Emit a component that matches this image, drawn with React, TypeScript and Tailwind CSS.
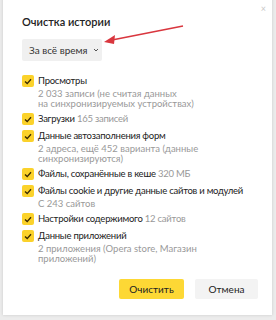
const items = [
  { title: 'Просмотры', sub: ['2 033 записи (не считая данных', 'на синхронизируемых устройствах)'] },
  { title: 'Загрузки', extra: '165 записей' },
  { title: 'Данные автозаполнения форм', sub: ['2 адреса, ещё 452 варианта (данные', 'синхронизируются)'] },
  { title: 'Файлы, сохранённые в кеше', extra: '320 МБ' },
  { title: 'Файлы cookie и другие данные сайтов и модулей', sub: ['С 243 сайтов'] },
  { title: 'Настройки содержимого', extra: '12 сайтов' },
  { title: 'Данные приложений', sub: ['2 приложения (Opera store, Магазин', 'приложений)'] },
];

const Check = () => (
  <div className="w-[12px] h-[12px] rounded-[2px] bg-[#fbd22b] flex items-center justify-center shrink-0 mt-[1px]">
    <svg width="8" height="7" viewBox="0 0 8 7" fill="none">
      <path d="M1 3.5 L3.2 5.6 L7 1.2" stroke="#3a2a00" strokeWidth="1.4" />
    </svg>
  </div>
);

export default function App() {
  return (
    <div className="w-[276px] h-[320px] bg-[#ececec] relative overflow-hidden" style={{ fontFamily: 'Lato, "Open Sans", sans-serif' }}>
      <div className="absolute left-[3px] right-[4px] top-[-10px] bottom-[5px] bg-white shadow-[0_0_3px_rgba(0,0,0,0.15)]">
        <span className="absolute right-[6px] top-[14px] text-[9px] text-[#c8c8c8] leading-none">×</span>
        <div className="pl-[19px] pr-[6px] pt-[25px]">
          <div className="text-[11px] font-semibold text-[#222] leading-[14px] whitespace-nowrap">Очистка истории</div>
          <div className="mt-[10px] w-[80px] h-[22px] bg-[#f0f0f0] rounded-[2px] flex items-center pl-[7px] gap-[5px] text-[10px] text-[#333] whitespace-nowrap">
            <span>За всё время</span>
            <svg width="6" height="4" viewBox="0 0 6 4"><path d="M1 1 L3 3 L5 1" stroke="#555" strokeWidth="1" fill="none" /></svg>
          </div>
          <div className="mt-[13px] flex flex-col gap-[3px]">
            {items.map((it) => (
              <div key={it.title} className="flex gap-[4px]">
                <Check />
                <div className="whitespace-nowrap">
                  <div className="text-[9.5px] leading-[14px] tracking-[-0.25px] text-[#222]">
                    {it.title}
                    {it.extra && <span className="text-[#999]"> {it.extra}</span>}
                  </div>
                  {it.sub && (
                    <div className="mt-[1px] text-[9.5px] leading-[10px] text-[#999]">
                      {it.sub.map((s) => (
                        <div key={s}>{s}</div>
                      ))}
                    </div>
                  )}
                </div>
              </div>
            ))}
          </div>
          <div className="mt-[15px] flex justify-end gap-[11px] pr-[8px]">
            <button className="w-[65px] h-[20px] bg-[#fdd835] rounded-[2px] text-[10px] text-[#222]">Очистить</button>
            <button className="w-[63px] h-[20px] bg-[#f3f3f3] rounded-[2px] text-[10px] text-[#222]">Отмена</button>
          </div>
        </div>
      </div>
      <svg className="absolute left-0 top-0" width="276" height="320">
        <line x1="183" y1="26" x2="112" y2="40" stroke="#d9363e" strokeWidth="1.6" />
        <path d="M104 42 L115 35 L114 44 Z" fill="#d9363e" />
      </svg>
    </div>
  );
}
